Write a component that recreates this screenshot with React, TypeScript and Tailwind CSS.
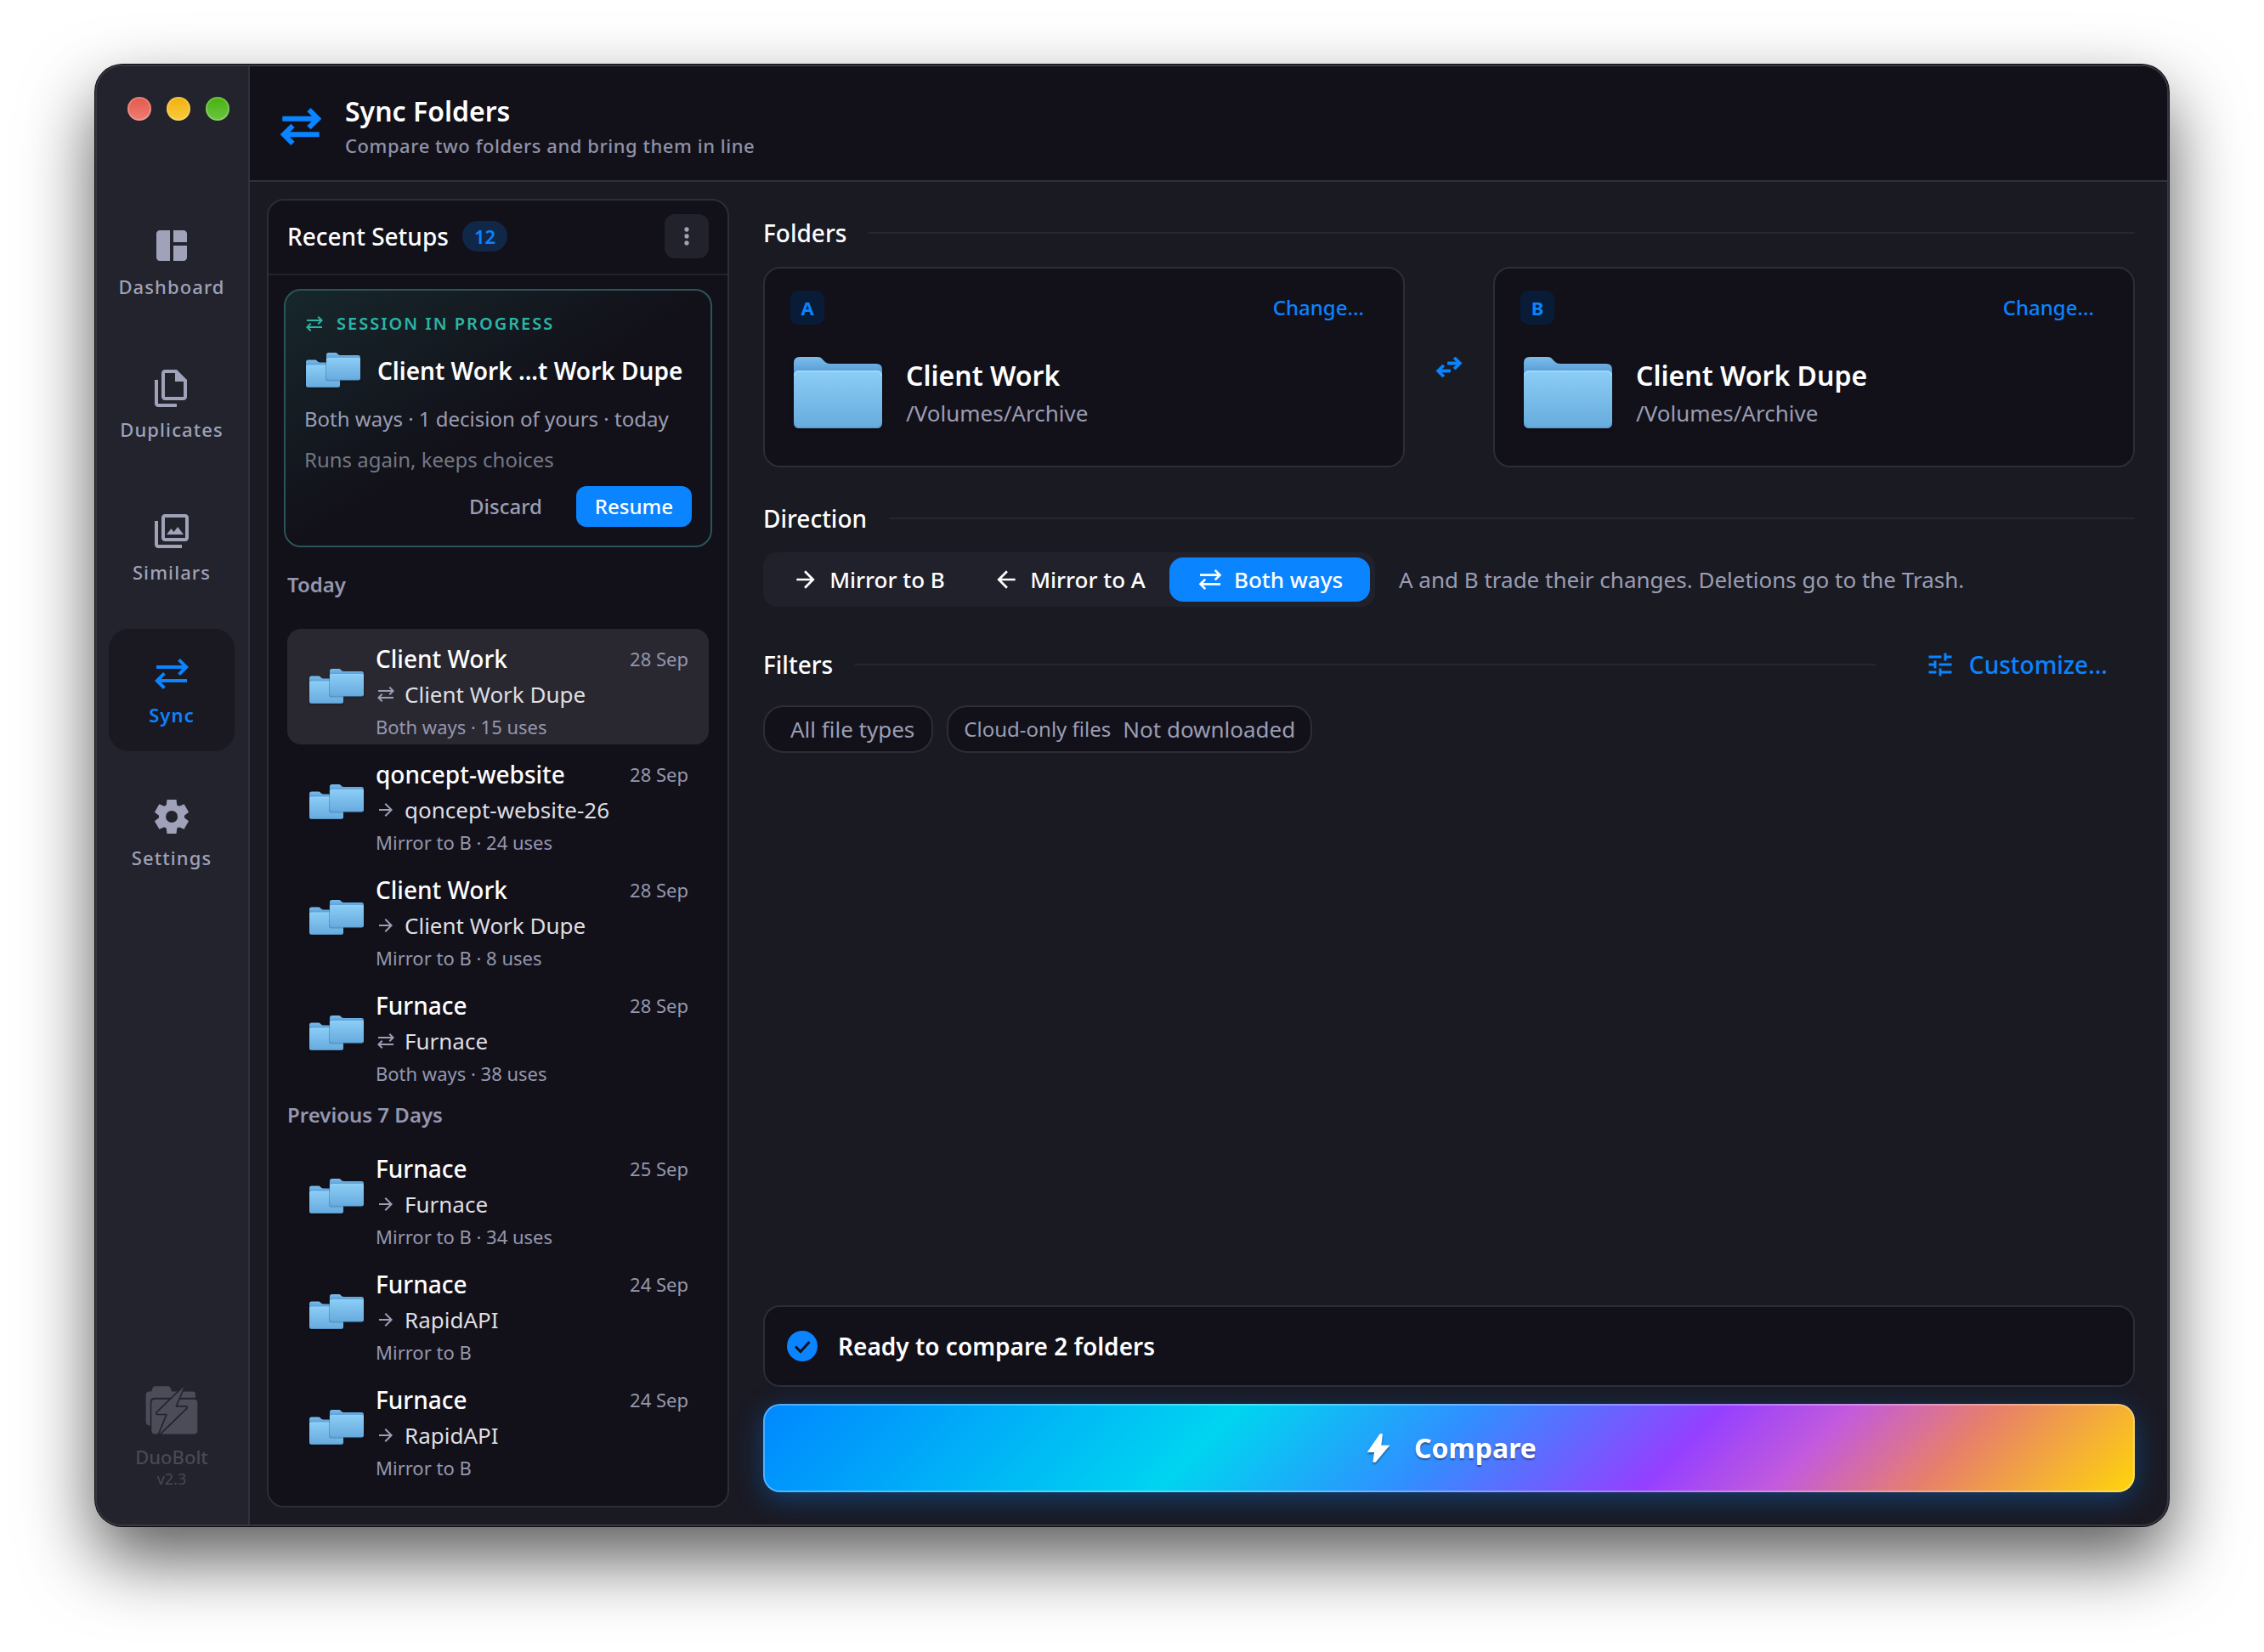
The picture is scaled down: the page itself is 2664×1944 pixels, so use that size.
import { useId } from "react";

type Mode = "both" | "toB" | "toA";

const PATHS = {
  dashboard: "M440-120H200q-33 0-56.500-23.500T120-200v-560q0-33 23.500-56.500T200-840h240v720Zm80 0v-360h320v280q0 33-23.500 56.500T760-120H520Zm0-440v-280h240q33 0 56.500 23.500T840-760v200H520Z",
  duplicates: "M760-200H320q-33 0-56.500-23.500T240-280v-560q0-33 23.500-56.500T320-920h280l240 240v400q0 33-23.500 56.500T760-200ZM560-640v-200H320v560h440v-360H560ZM160-40q-33 0-56.500-23.500T80-120v-560h80v560h440v80H160Z",
  similars: "M360-400h400L622-580l-92 120-62-80-108 140Zm-40 160q-33 0-56.500-23.500T240-320v-480q0-33 23.500-56.500T320-880h480q33 0 56.500 23.500T880-800v480q0 33-23.500 56.500T800-240H320Zm0-80h480v-480H320v480ZM160-80q-33 0-56.500-23.500T80-160v-560h80v560h560v80H160Z",
  both: "M280-120 80-320l200-200 57 56-104 104h607v80H233l104 104-57 56Zm400-320-57-56 104-104H120v-80h607L623-784l57-56 200 200-200 200Z",
  settings: "m370-80-16-128q-13-5-24.500-12T307-235l-119 50L78-375l103-78q-1-7-1-13.500v-27q0-6.500 1-13.500L78-585l110-190 119 50q11-8 23-15t24-12l16-128h220l16 128q13 5 24.500 12t22.500 15l119-50 110 190-103 78q1 7 1 13.500v27q0 6.500-2 13.500l103 78-110 190-118-50q-11 8-23 15t-24 12L590-80H370Zm112-260q58 0 99-41t41-99q0-58-41-99t-99-41q-59 0-99.500 41T342-480q0 58 40.500 99t99.500 41Z",
  swap: "M280-160 80-360l200-200 56 57-103 103h287v80H233l103 103-56 57Zm400-240-56-57 103-103H440v-80h287L624-743l56-57 200 200-200 200Z",
  toB: "M647-440H160v-80h487L423-744l57-56 320 320-320 320-57-56 224-224Z",
  toA: "m313-440 224 224-57 56-320-320 320-320 57 56-224 224h487v80H313Z",
  more: "M480-160q-33 0-56.500-23.500T400-240q0-33 23.500-56.500T480-320q33 0 56.500 23.500T560-240q0 33-23.500 56.500T480-160Zm0-240q-33 0-56.500-23.500T400-480q0-33 23.500-56.500T480-560q33 0 56.500 23.500T560-480q0 33-23.500 56.500T480-400Zm0-240q-33 0-56.500-23.500T400-720q0-33 23.500-56.500T480-800q33 0 56.500 23.500T560-720q0 33-23.500 56.500T480-640Z",
  tune: "M440-120v-240h80v80h320v80H520v80h-80Zm-320-80v-80h240v80H120Zm160-160v-80H120v-80h160v-80h80v240h-80Zm160-80v-80h400v80H440Zm160-160v-240h80v80h160v80H680v80h-80Zm-480-80v-80h400v80H120Z",
  bolt: "m320-80 40-280H160l360-520h80l-40 320h240L400-80h-80Z",
};

function Icon({ name, className, stroke = 0 }: { name: keyof typeof PATHS; className: string; stroke?: number }) {
  return (
    <svg viewBox="0 -960 960 960" fill="currentColor" stroke="currentColor" strokeWidth={stroke} aria-hidden="true" className={"shrink-0 " + className}>
      <path d={PATHS[name]} />
    </svg>
  );
}

function FolderShape({ id }: { id: string }) {
  return (
    <>
      <path d="M0 7Q0 0 7 0H28Q32 0 34 3L37 6Q39 8 43 8H97Q104 8 104 15V60H0Z" fill={`url(#${id}-back)`} />
      <rect x="0" y="16" width="104" height="68" rx="6" fill={`url(#${id}-front)`} />
      <path d="M1 22Q1 17 6 17H98Q103 17 103 22" fill="none" stroke="#a6dcfa" strokeWidth="1.500" />
      <path d="M1 78Q1 83 6 83H98Q103 83 103 78" fill="none" stroke="#5b9fd3" strokeWidth="1.500" />
    </>
  );
}

function FolderDefs({ id }: { id: string }) {
  return (
    <defs>
      <linearGradient id={`${id}-back`} x1="0" y1="0" x2="0" y2="1">
        <stop offset="0" stopColor="#7dbdea" />
        <stop offset="0.280" stopColor="#5a9fd8" />
      </linearGradient>
      <linearGradient id={`${id}-front`} x1="0" y1="0" x2="0" y2="1">
        <stop offset="0" stopColor="#8bcdf6" />
        <stop offset="1" stopColor="#67abde" />
      </linearGradient>
    </defs>
  );
}

function Folder() {
  const id = useId();
  return (
    <svg viewBox="-4 0 112 88" aria-hidden="true" className="h-[88px] w-[112px] shrink-0 drop-shadow-[0_2px_2px_rgba(0,0,0,0.4)]">
      <FolderDefs id={id} />
      <FolderShape id={id} />
    </svg>
  );
}

function FolderPair() {
  const id = useId();
  return (
    <svg viewBox="0 0 64 42" aria-hidden="true" className="h-[42px] w-16 shrink-0 drop-shadow-[0_1px_1px_rgba(0,0,0,0.4)]">
      <FolderDefs id={id} />
      <g transform="translate(0 8.500) scale(0.385)">
        <FolderShape id={id} />
      </g>
      <rect x="23" y="3" width="41" height="30.500" rx="3" fill="#1c4a75" opacity="0.350" />
      <g transform="translate(24 0) scale(0.385)">
        <FolderShape id={id} />
      </g>
    </svg>
  );
}

function Logo() {
  return (
    <svg viewBox="60 50 192 200" aria-hidden="true" className="h-[67px] w-16">
      <path fill="#4b4c58" d="M65 96Q65 84 77 84H84L89 71Q91 65 97 65H143Q149 65 152 71L156 84H230Q240 84 240 94V106H96Q80 106 80 122V205Q65 203 65 190Z" />
      <rect x="85" y="112" width="162" height="122" rx="12" fill="#4b4c58" />
      <path d="M206 57 102 158Q99 165 106 165H138L105 245 210 143Q214 137 206 136H172Z" fill="#4b4c58" stroke="#22232c" strokeWidth="5" strokeLinejoin="round" />
    </svg>
  );
}

const NAV: { label: string; icon: keyof typeof PATHS; active?: boolean }[] = [
  { label: "Dashboard", icon: "dashboard" },
  { label: "Duplicates", icon: "duplicates" },
  { label: "Similars", icon: "similars" },
  { label: "Sync", icon: "both", active: true },
  { label: "Settings", icon: "settings" },
];

function Sidebar() {
  return (
    <aside className="flex w-[180px] shrink-0 flex-col border-r-2 border-[#30313c] bg-[#22232c] pt-9 pr-[2px] pb-[42px]">
      <div className="flex gap-[18px] pl-9">
        <button aria-label="Close" className="size-7 rounded-full bg-linear-to-b from-[#e2574c] to-[#f07d73] inset-ring-2 inset-ring-white/20" />
        <button aria-label="Minimize" className="size-7 rounded-full bg-linear-to-b from-[#f0b000] to-[#f9cb3c] inset-ring-2 inset-ring-white/20" />
        <button aria-label="Zoom" className="size-7 rounded-full bg-linear-to-b from-[#47b000] to-[#6bc640] inset-ring-2 inset-ring-white/20" />
      </div>
      <nav className="mt-[94px] flex flex-col gap-6 px-[14px]">
        {NAV.map((n) => (
          <a
            key={n.label}
            href="#"
            aria-current={n.active ? "page" : undefined}
            className={
              "flex h-36 flex-col items-center justify-center gap-[10px] rounded-3xl text-[22px] leading-7 tracking-wider " +
              (n.active ? "bg-[#1a1820] font-semibold text-[#0a84ff]" : "font-medium text-[#9fa2b8]")
            }
          >
            <Icon name={n.icon} className="size-12" />
            {n.label}
          </a>
        ))}
      </nav>
      <div className="mt-auto flex flex-col items-center text-[#484954]">
        <Logo />
        <p className="mt-[7px] text-[22px] leading-7 font-medium">DuoBolt</p>
        <p className="text-[18px] leading-6">v2.3</p>
      </div>
    </aside>
  );
}

type Setup = { from: string; to: string; mode: Mode; uses?: number; date: string; selected?: boolean };

const GROUPS: { title: string; items: Setup[] }[] = [
  {
    title: "Today",
    items: [
      { from: "Client Work", to: "Client Work Dupe", mode: "both", uses: 15, date: "28 Sep", selected: true },
      { from: "qoncept-website", to: "qoncept-website-26", mode: "toB", uses: 24, date: "28 Sep" },
      { from: "Client Work", to: "Client Work Dupe", mode: "toB", uses: 8, date: "28 Sep" },
      { from: "Furnace", to: "Furnace", mode: "both", uses: 38, date: "28 Sep" },
    ],
  },
  {
    title: "Previous 7 Days",
    items: [
      { from: "Furnace", to: "Furnace", mode: "toB", uses: 34, date: "25 Sep" },
      { from: "Furnace", to: "RapidAPI", mode: "toB", date: "24 Sep" },
      { from: "Furnace", to: "RapidAPI", mode: "toB", date: "24 Sep" },
      { from: "qoncept-website", to: "qoncept-website-26", mode: "toB", date: "23 Sep" },
    ],
  },
];

const MODE_LABEL: Record<Mode, string> = { both: "Both ways", toB: "Mirror to B", toA: "Mirror to A" };

function SetupRow({ s }: { s: Setup }) {
  return (
    <li>
      <button className={"flex h-[136px] w-full items-center gap-[14px] rounded-2xl pr-6 pl-[26px] text-left " + (s.selected ? "bg-[#292831]" : "")}>
        <FolderPair />
        <span className="flex min-w-0 flex-1 flex-col self-start pt-[13px]">
          <span className="flex items-center justify-between leading-[44px]">
            <span className="text-[28px] font-medium text-white">{s.from}</span>
            <span className="text-[22px] text-[#9597ae]">{s.date}</span>
          </span>
          <span className="flex items-center gap-[10px] text-[26px] leading-10 text-[#dedee3]">
            <Icon name={s.mode} className="size-6 text-[#9b9eb4]" />
            {s.to}
          </span>
          <span className="text-[22px] leading-9 text-[#9597ae]">
            {MODE_LABEL[s.mode]}
            {s.uses ? ` · ${s.uses} uses` : ""}
          </span>
        </span>
      </button>
    </li>
  );
}

function RecentSetups() {
  return (
    <section className="flex w-[544px] shrink-0 flex-col overflow-hidden rounded-[20px] border-2 border-[#2d2d39] bg-[#12111a]">
      <header className="flex h-[88px] shrink-0 items-center border-b-2 border-[#23232d] px-[22px] pb-[2px]">
        <h2 className="text-[28px] font-medium text-white">Recent Setups</h2>
        <span className="ml-4 rounded-full bg-[#112747] px-[14px] text-[22px] leading-9 font-semibold text-[#0a84ff]">12</span>
        <button aria-label="More options" className="ml-auto flex size-[52px] items-center justify-center rounded-xl bg-[#21222b] text-[#a2a4b6]">
          <Icon name="more" className="size-8" />
        </button>
      </header>
      <div className="flex min-h-0 flex-1 flex-col overflow-hidden">
        <article className="mx-[18px] mt-4 flex shrink-0 flex-col gap-[14px] rounded-[20px] border-2 border-[#2a5559] bg-linear-to-br from-[#16272b] to-[#12111a] to-50% p-[22px] text-[24px] leading-[34px]">
          <p className="flex items-center gap-[14px] text-[20px] font-semibold tracking-widest text-[#2bb5a5]">
            <Icon name="both" className="size-6" />
            SESSION IN PROGRESS
          </p>
          <h3 className="flex h-[50px] items-center gap-5 pb-[2px] pl-[2px] text-[28px] font-semibold whitespace-nowrap text-white">
            <FolderPair />
            Client Work ...t Work Dupe
          </h3>
          <p className="text-[#9b9db3]">Both ways · 1 decision of yours · today</p>
          <p className="text-[#757784]">Runs again, keeps choices</p>
          <div className="flex h-12 justify-end gap-5">
            <button className="px-5 font-medium text-[#9b9eb4]">Discard</button>
            <button className="rounded-xl bg-[#0a84ff] px-[22px] font-medium text-white">Resume</button>
          </div>
        </article>
        {GROUPS.map((g, i) => (
          <section key={g.title} className="shrink-0 px-[22px]">
            <h3 className={"text-[24px] leading-[56px] font-semibold text-[#9597ae] " + (i === 0 ? "mt-4 mb-6" : "")}>{g.title}</h3>
            <ul>
              {g.items.map((s, k) => (
                <SetupRow key={k} s={s} />
              ))}
            </ul>
          </section>
        ))}
      </div>
    </section>
  );
}

function SectionTitle({ children }: { children: string }) {
  return (
    <>
      <h2 className="text-[28px] leading-10 font-medium text-white">{children}</h2>
      <div className="h-[2px] flex-1 bg-[#262732]" />
    </>
  );
}

function FolderCard({ badge, name, path }: { badge: string; name: string; path: string }) {
  return (
    <article className="flex min-w-0 flex-1 flex-col gap-[38px] rounded-[20px] border-2 border-[#2d2d39] bg-[#12111a] px-[30px] pt-[26px] pb-10">
      <div className="flex items-center justify-between">
        <span className="flex size-10 items-center justify-center rounded-[10px] bg-[#081c38] text-[22px] font-bold text-[#0a84ff]">{badge}</span>
        <button className="px-4 text-[24px] font-medium text-[#0a84ff]">Change...</button>
      </div>
      <div className="flex items-start gap-6">
        <Folder />
        <div className="leading-[44px]">
          <h3 className="text-[32px] font-semibold text-white">{name}</h3>
          <p className="text-[26px] text-[#9b9db3]">{path}</p>
        </div>
      </div>
    </article>
  );
}

function Direction() {
  const options: Mode[] = ["toB", "toA", "both"];
  return (
    <div className="mt-5 flex items-center gap-7">
      <div role="group" aria-label="Direction" className="grid grid-cols-3 rounded-2xl bg-[#20212a] p-[6px]">
        {options.map((m) => (
          <button
            key={m}
            aria-pressed={m === "both"}
            className={"flex h-[52px] w-[236px] items-center justify-center gap-3 rounded-2xl text-[26px] font-medium text-white " + (m === "both" ? "bg-[#0a84ff]" : "")}
          >
            <Icon name={m} className="size-8" />
            {MODE_LABEL[m]}
          </button>
        ))}
      </div>
      <p className="text-[26px] text-[#9b9db3]">A and B trade their changes. Deletions go to the Trash.</p>
    </div>
  );
}

export default function App() {
  return (
    <div className="flex h-screen bg-white px-28 pt-[76px] pb-[148px] font-['Noto_Sans',sans-serif]">
      <div className="flex min-w-0 flex-1 overflow-hidden rounded-[32px] border-2 border-[#363741] bg-[#1a1a23] shadow-[0_0_0_1px_#0a0a0e,0_38px_84px_rgba(0,0,0,0.65)]">
        <Sidebar />
        <div className="flex min-w-0 flex-1 flex-col">
          <header className="flex h-[136px] shrink-0 items-center gap-6 border-b-2 border-[#30313c] bg-[#12111a] px-8 pt-2">
            <Icon name="both" stroke={24} className="size-14 text-[#0a84ff]" />
            <div>
              <h1 className="text-[32px] leading-[44px] font-semibold text-white">Sync Folders</h1>
              <p className="text-[22px] leading-9 font-medium tracking-wide text-[#9092a7]">Compare two folders and bring them in line</p>
            </div>
          </header>
          <div className="flex min-h-0 flex-1 gap-10 p-5">
            <RecentSetups />
            <main className="flex min-w-0 flex-1 flex-col pt-5 pr-[18px] pb-[18px]">
              <div className="flex items-center gap-[26px]">
                <SectionTitle>Folders</SectionTitle>
              </div>
              <div className="mt-5 flex items-center">
                <FolderCard badge="A" name="Client Work" path="/Volumes/Archive" />
                <button aria-label="Swap folders" className="flex w-[104px] justify-center text-[#0a84ff]">
                  <Icon name="swap" stroke={24} className="size-9" />
                </button>
                <FolderCard badge="B" name="Client Work Dupe" path="/Volumes/Archive" />
              </div>
              <div className="mt-10 flex items-center gap-[26px]">
                <SectionTitle>Direction</SectionTitle>
              </div>
              <Direction />
              <div className="mt-10 flex h-14 items-center gap-[26px]">
                <SectionTitle>Filters</SectionTitle>
                <button className="flex items-center gap-4 px-8 text-[28px] font-medium text-[#0a84ff]">
                  <Icon name="tune" className="size-9" />
                  Customize...
                </button>
              </div>
              <div className="mt-5 flex gap-4 text-[26px] text-[#9b9db3]">
                <button className="h-14 rounded-3xl border-2 border-[#2d2d39] bg-[#12111a] pr-5 pl-[30px]">All file types</button>
                <button className="flex h-14 items-center gap-[14px] rounded-3xl border-2 border-[#2d2d39] bg-[#12111a] px-[18px]">
                  <span className="text-[24px]">Cloud-only files</span>
                  <span>Not downloaded</span>
                </button>
              </div>
              <div role="status" className="mt-auto flex h-24 items-center gap-5 rounded-[20px] border-2 border-[#2d2d39] bg-[#12111a] px-[22px] text-[28px] font-semibold text-white">
                <svg viewBox="0 0 44 44" aria-hidden="true" className="size-11 shrink-0">
                  <circle cx="22" cy="22" r="18" fill="#0a84ff" />
                  <path d="m14 22.500 6 6 10.500-11.500" fill="none" stroke="#12111a" strokeWidth="3" />
                </svg>
                Ready to compare 2 folders
              </div>
              <button className="mt-5 flex h-[104px] items-center justify-center gap-[22px] rounded-[20px] bg-[linear-gradient(135deg,#0088ff_0%,#00d4f0_33%,#2f90ff_49%,#9540ff_66%,#c35bdc_75%,#e8806a_85%,#ffd60a_100%)] text-[32px] font-bold text-white shadow-[0_8px_32px_rgba(10,132,255,0.35)] inset-ring-2 inset-ring-white/30 text-shadow-[0_2px_2px_rgba(0,0,0,0.4)]">
                <Icon name="bolt" className="size-10 drop-shadow-[0_2px_1px_rgba(0,0,0,0.4)]" />
                Compare
              </button>
            </main>
          </div>
        </div>
      </div>
    </div>
  );
}
